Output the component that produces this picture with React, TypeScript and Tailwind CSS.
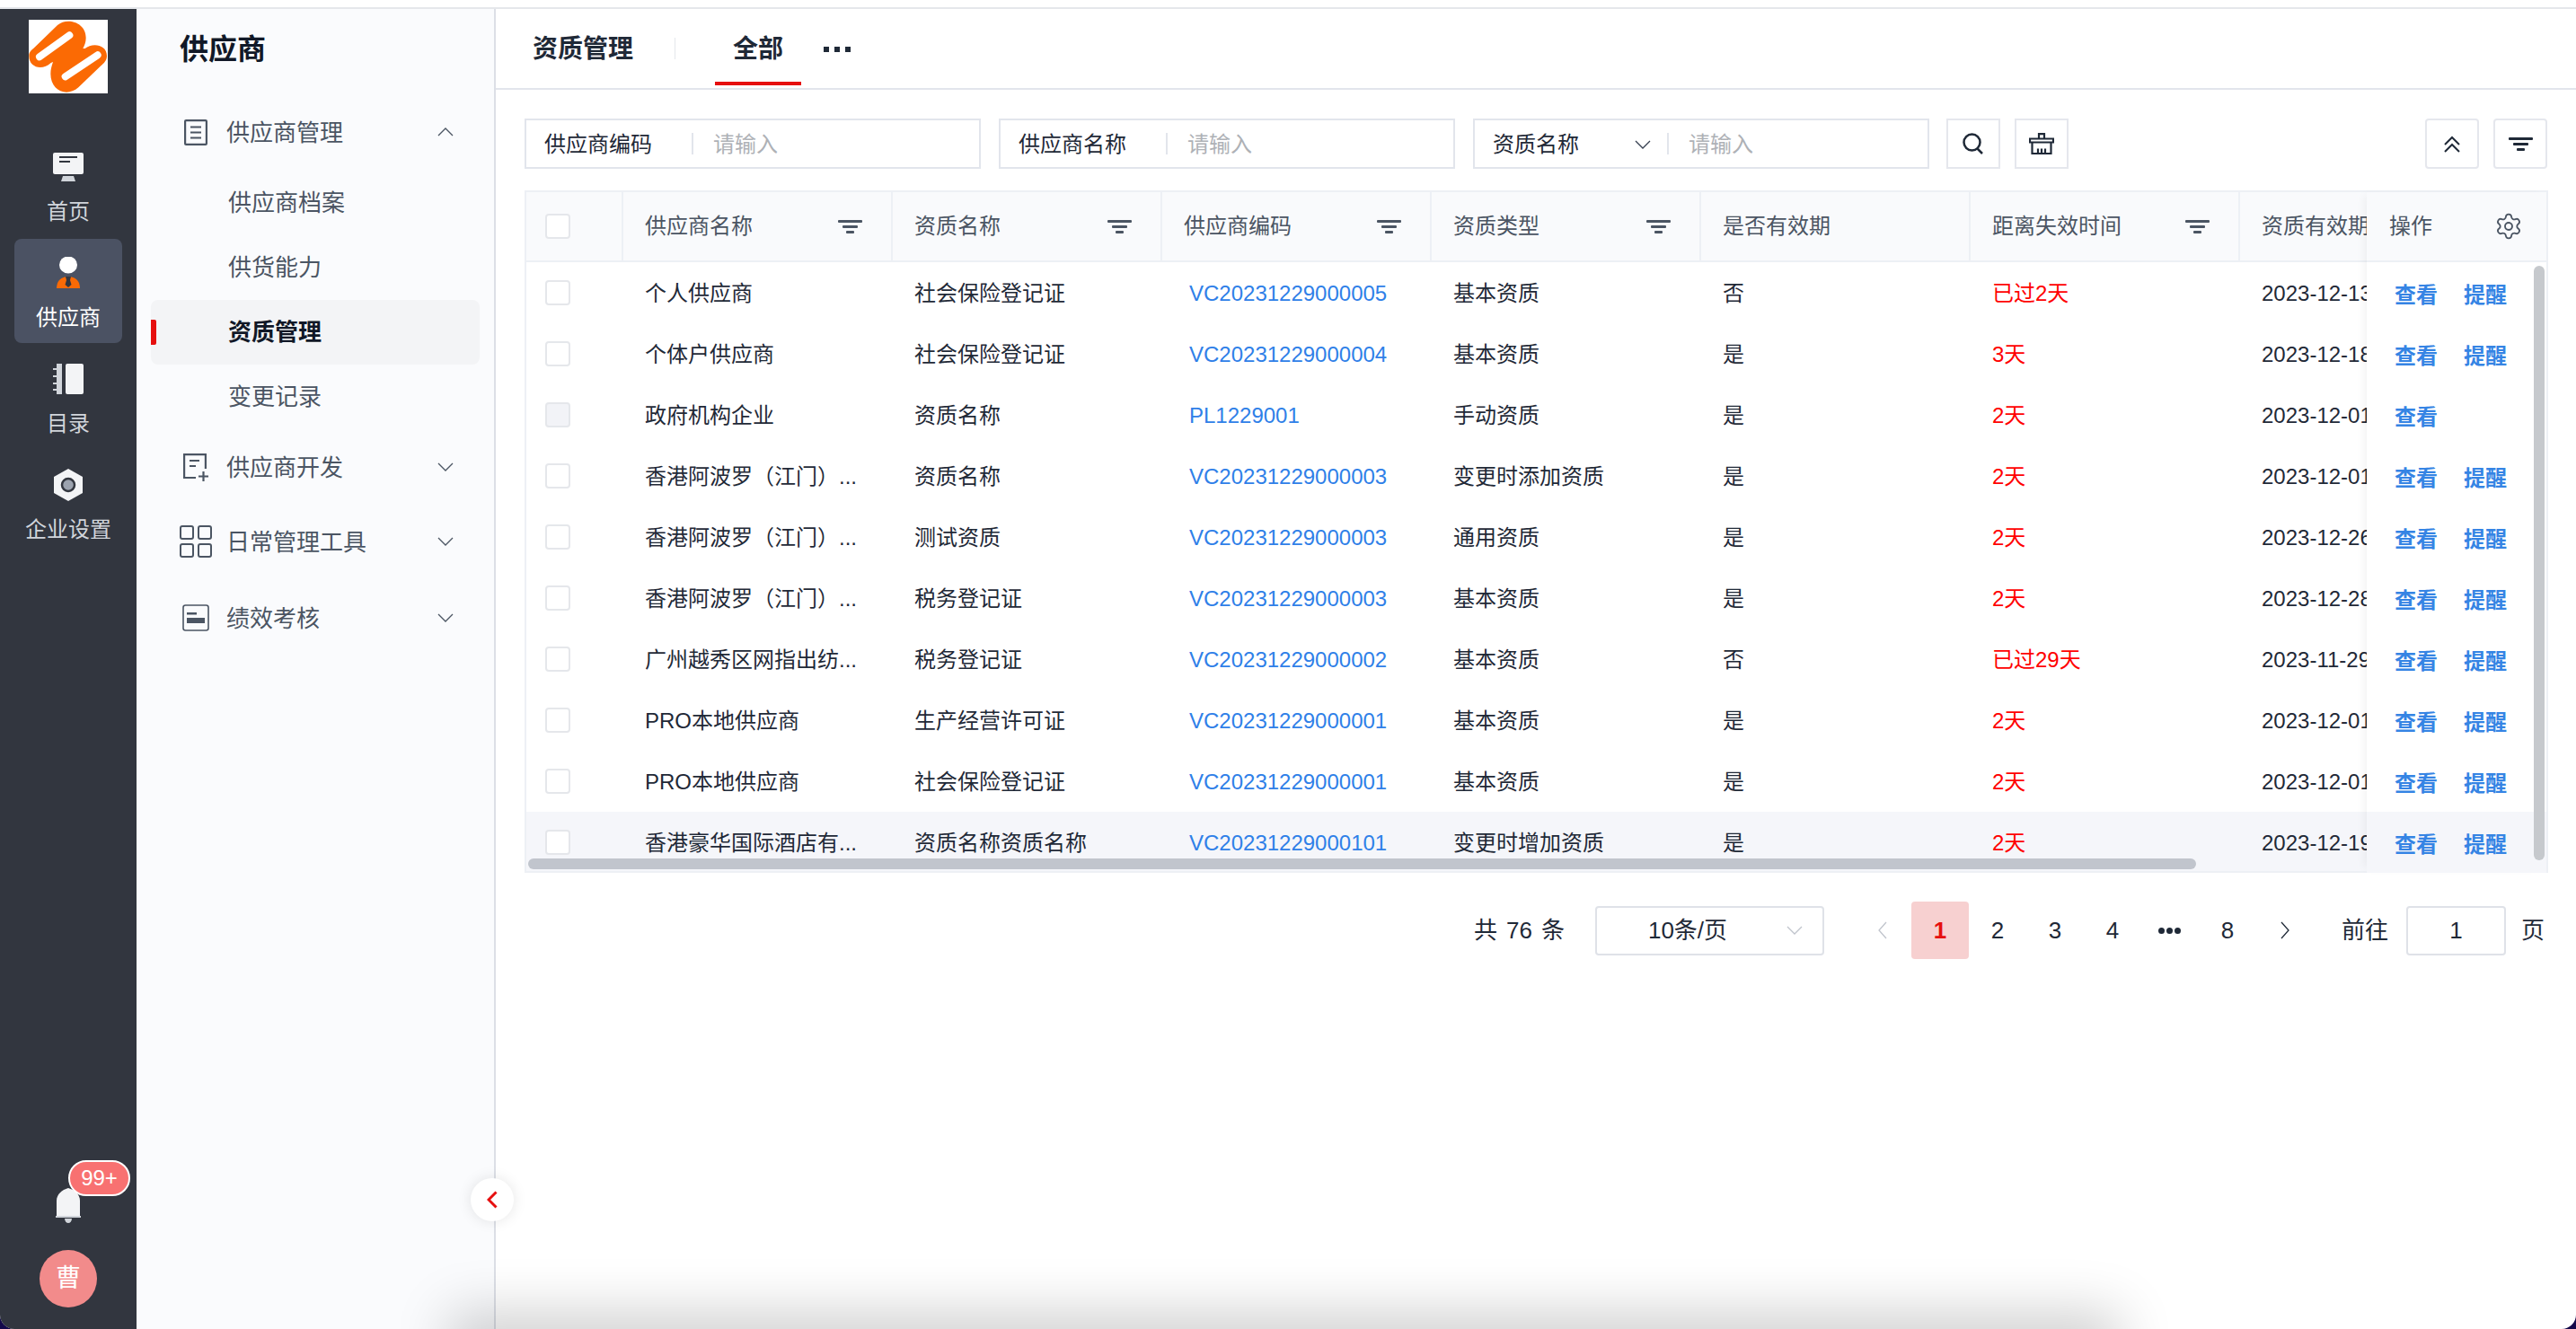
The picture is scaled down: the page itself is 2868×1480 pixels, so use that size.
import { Settings } from "lucide-react";

const rows = [
  { name: "个人供应商", cert: "社会保险登记证", code: "VC20231229000005", type: "基本资质", valid: "否", left: "已过2天", date: "2023-12-13" },
  { name: "个体户供应商", cert: "社会保险登记证", code: "VC20231229000004", type: "基本资质", valid: "是", left: "3天", date: "2023-12-18" },
  { name: "政府机构企业", cert: "资质名称", code: "PL1229001", type: "手动资质", valid: "是", left: "2天", date: "2023-12-01", locked: true },
  { name: "香港阿波罗（江门）...", cert: "资质名称", code: "VC20231229000003", type: "变更时添加资质", valid: "是", left: "2天", date: "2023-12-01" },
  { name: "香港阿波罗（江门）...", cert: "测试资质", code: "VC20231229000003", type: "通用资质", valid: "是", left: "2天", date: "2023-12-26" },
  { name: "香港阿波罗（江门）...", cert: "税务登记证", code: "VC20231229000003", type: "基本资质", valid: "是", left: "2天", date: "2023-12-28" },
  { name: "广州越秀区网指出纺...", cert: "税务登记证", code: "VC20231229000002", type: "基本资质", valid: "否", left: "已过29天", date: "2023-11-29" },
  { name: "PRO本地供应商", cert: "生产经营许可证", code: "VC20231229000001", type: "基本资质", valid: "是", left: "2天", date: "2023-12-01" },
  { name: "PRO本地供应商", cert: "社会保险登记证", code: "VC20231229000001", type: "基本资质", valid: "是", left: "2天", date: "2023-12-01" },
  { name: "香港豪华国际酒店有...", cert: "资质名称资质名称", code: "VC20231229000101", type: "变更时增加资质", valid: "是", left: "2天", date: "2023-12-19", hover: true },
];

const headers = [
  { label: "供应商名称", filter: true },
  { label: "资质名称", filter: true },
  { label: "供应商编码", filter: true },
  { label: "资质类型", filter: true },
  { label: "是否有效期", filter: false },
  { label: "距离失效时间", filter: true },
  { label: "资质有效期", filter: false },
];

function Logo() {
  return (
    <svg width="88" height="82" viewBox="24 24 264 246" className="bg-white">
      <path
        d="M25 145C25 130 35 125 45 115L120 42C150 15 215 30 215 85C215 100 210 110 205 120L212 120C235 100 285 105 285 145C285 160 275 170 265 178L190 250C150 285 97 260 97 205C97 190 100 180 105 165L98 168C70 195 25 185 25 145Z"
        fill="#fb6a04"
      />
      <path d="M60 148L160 76M146 214L254 142" stroke="#ffffff" strokeWidth="24" strokeLinecap="round" />
    </svg>
  );
}

function HomeIcon() {
  return (
    <svg width="34" height="32" viewBox="0 0 34 32">
      <rect x="0" y="0" width="34" height="24" rx="2" fill="#f3f4f6" />
      <rect x="7" y="4" width="20" height="2" fill="#32363f" />
      <rect x="7" y="9" width="12" height="2" fill="#32363f" />
      <path d="M9 32l2-6h12l2 6z" fill="#d1d5db" />
    </svg>
  );
}

function SupplierIcon() {
  return (
    <svg width="28" height="36" viewBox="0 0 28 36">
      <ellipse cx="14" cy="9" rx="10" ry="9.500" fill="#ffffff" />
      <path d="M1 35c0-8 5-13 13-13s13 5 13 13z" fill="#f96a06" />
      <path d="M11 22h6l-1 4 1.500 5-3.500 3-3.500-3 1.500-5z" fill="#32363f" />
    </svg>
  );
}

function CatalogIcon() {
  return (
    <svg width="34" height="34" viewBox="0 0 34 34">
      <rect x="4" y="0" width="6" height="34" fill="#d1d5db" />
      <rect x="0" y="5" width="6" height="2" fill="#d1d5db" />
      <rect x="0" y="13" width="6" height="2" fill="#d1d5db" />
      <rect x="0" y="21" width="6" height="2" fill="#d1d5db" />
      <rect x="0" y="28" width="6" height="2" fill="#d1d5db" />
      <rect x="14" y="0" width="20" height="34" rx="2" fill="#f3f4f6" />
    </svg>
  );
}

function CompanyIcon() {
  return (
    <svg width="32" height="36" viewBox="0 0 32 36">
      <path d="M16 0l16 9v18l-16 9-16-9V9z" fill="#f3f4f6" />
      <ellipse cx="16" cy="18" rx="7" ry="7" fill="#9ca3af" stroke="#32363f" strokeWidth="2.500" />
    </svg>
  );
}

function BellIcon() {
  return (
    <svg width="28" height="39" viewBox="0 0 28 39">
      <path d="M1 31V14C1 7 7 2 14 0c7 2 13 7 13 14v17z" fill="#f3f4f6" />
      <rect x="0" y="31" width="28" height="2" fill="#d1d5db" />
      <path d="M10 34h8c0 3-2 5-4 5s-4-2-4-5z" fill="#d1d5db" />
    </svg>
  );
}

function Chevron({ up, className }: { up?: boolean; className?: string }) {
  return (
    <svg width="18" height="10" viewBox="0 0 18 10" fill="none" className={className}>
      <path d={up ? "M1 9l8-8 8 8" : "M1 1l8 8 8-8"} stroke="currentColor" strokeWidth="1.300" />
    </svg>
  );
}

function ListDocIcon() {
  return (
    <svg width="26" height="29" viewBox="0 0 26 29" fill="none" stroke="#4b5563" strokeWidth="2.200">
      <rect x="1.100" y="1.100" width="23.800" height="26.800" rx="1" />
      <path d="M7 8.500h12M7 14.500h12M7 20.500h12" />
    </svg>
  );
}

function DocPlusIcon() {
  return (
    <svg width="28" height="31" viewBox="0 0 28 31" fill="none" stroke="#4b5563" strokeWidth="2.200">
      <path d="M14 27H1.100V1.100h23.800V17" />
      <path d="M7 8h11M7 14h7M17 25.500h11M22.500 20v11" />
    </svg>
  );
}

function GridIcon() {
  return (
    <svg width="36" height="36" viewBox="0 0 36 36" fill="none" stroke="#4b5563" strokeWidth="2">
      <rect x="1" y="1" width="14" height="14" rx="2" />
      <rect x="21" y="1" width="14" height="14" rx="2" />
      <rect x="1" y="21" width="14" height="14" rx="2" />
      <rect x="21" y="21" width="14" height="14" rx="2" />
    </svg>
  );
}

function CardIcon() {
  return (
    <svg width="30" height="30" viewBox="0 0 30 30" fill="none">
      <rect x="1" y="1" width="28" height="28" rx="2.500" stroke="#4b5563" strokeWidth="1.600" />
      <rect x="5" y="9" width="11" height="2.500" fill="#4b5563" />
      <rect x="5" y="15" width="20" height="6" fill="#4b5563" />
    </svg>
  );
}

function FilterIcon({ className }: { className?: string }) {
  return (
    <svg width="27" height="15" viewBox="0 0 27 15" className={className}>
      <rect x="0" y="0" width="27" height="3" rx="1" fill="currentColor" />
      <rect x="5" y="6" width="17" height="3" rx="1" fill="currentColor" />
      <rect x="9" y="12" width="9" height="3" rx="1" fill="currentColor" />
    </svg>
  );
}

function BroomIcon() {
  return (
    <svg width="28" height="24" viewBox="0 0 28 24" fill="none" stroke="#1f2937" strokeWidth="2.200">
      <path d="M11 6V1.200h6V6" />
      <path d="M1 6.500h26v4H1zM3.500 10.500V23h21V10.500" />
      <path d="M10 17.500V23M14 17.500V23M18 17.500V23" />
    </svg>
  );
}

function SearchIcon() {
  return (
    <svg width="24" height="24" viewBox="0 0 24 24" fill="none" stroke="#1f2937" strokeWidth="2.500">
      <circle cx="10.500" cy="10.500" r="9" />
      <path d="M16 17l6 6" />
    </svg>
  );
}

function CollapseUpIcon() {
  return (
    <svg width="20" height="19" viewBox="0 0 20 19" fill="none" stroke="#1f2937" strokeWidth="2">
      <path d="M2 10l8-8 8 8M2 18l8-8 8 8" />
    </svg>
  );
}

function RailItem({ label, icon, active }: { label: string; icon: React.ReactNode; active?: boolean }) {
  return (
    <div className={`flex w-[120px] flex-col items-center pt-[20px] ${active ? "mb-[2px] h-[116px] rounded-[8px] bg-[#4b5263] text-white" : "h-[118px] text-[#d1d5db]"}`}>
      <div className="flex h-[36px] items-center justify-center">{icon}</div>
      <div className="mt-[16px] text-[24px] leading-[32px]">{label}</div>
    </div>
  );
}

function MenuRow({ icon, label, up, className }: { icon: React.ReactNode; label: string; up?: boolean; className: string }) {
  return (
    <div className={`flex h-[72px] items-center pl-[46px] pr-[45px] text-[#4b5563] ${className}`}>
      <div className="flex w-[40px] justify-center">{icon}</div>
      <div className="ml-[14px] pt-[2px] text-[26px]">{label}</div>
      <Chevron up={up} className="ml-auto" />
    </div>
  );
}

function SubRow({ label, active }: { label: string; active?: boolean }) {
  return (
    <div className={`relative mx-[16px] flex h-[72px] items-center rounded-[8px] pl-[86px] text-[26px] ${active ? "bg-[#f3f4f6] font-semibold text-[#111827]" : "text-[#4b5563]"}`}>
      {active && <div className="absolute left-0 top-[22px] h-[28px] w-[6px] rounded-r-[2px] bg-[#e60f0f]" />}
      {label}
    </div>
  );
}

function SearchField({ label, select }: { label: string; select?: boolean }) {
  return (
    <div className="flex h-[56px] w-[508px] items-center border-2 border-[#e2e5ec] text-[24px]">
      <div className={`flex items-center pt-[2px] text-[#1f2937] ${select ? "w-[214px] pl-[20px] pr-[18px]" : "w-[184px] pl-[20px]"}`}>
        {label}
        {select && <Chevron className="ml-auto text-[#374151]" />}
      </div>
      <div className="h-[24px] w-[2px] bg-[#e2e5ec]" />
      <div className="ml-[22px] pt-[2px] text-[#aeb1b6]">请输入</div>
    </div>
  );
}

function ToolButton({ children, round }: { children: React.ReactNode; round?: boolean }) {
  return (
    <div className={`flex h-[56px] w-[60px] items-center justify-center border-2 border-[#e5e7ed] ${round ? "rounded-[4px]" : ""}`}>
      {children}
    </div>
  );
}

function Checkbox({ locked }: { locked?: boolean }) {
  return <div className={`h-[28px] w-[28px] rounded-[4px] border-2 border-[#e5e7eb] ${locked ? "bg-[#f2f3f7]" : "bg-white"}`} />;
}

export default function App() {
  return (
    <div className="relative h-[1480px] w-[2868px] overflow-hidden bg-[#14094a] [font-family:'Liberation_Sans','Noto_Sans_CJK_SC',sans-serif]">
      <div className="flex h-full flex-col overflow-hidden rounded-b-[16px] bg-white">
        {/* 상단 라인 */}
        <div className="h-[8px] bg-white" />
        <div className="h-[2px] bg-[#e5e7eb]" />

        <div className="flex min-h-0 flex-1">
          {/* 좌측 아이콘 레일 */}
          <div className="flex w-[152px] flex-col items-center bg-[#32363f]">
            <div className="mt-[12px]">
              <Logo />
            </div>
            <div className="mt-[44px] flex flex-col items-center">
              <RailItem label="首页" icon={<HomeIcon />} />
              <RailItem label="供应商" icon={<SupplierIcon />} active />
              <RailItem label="目录" icon={<CatalogIcon />} />
              <RailItem label="企业设置" icon={<CompanyIcon />} />
            </div>
            <div className="relative mt-auto flex h-[39px] w-[28px]">
              <BellIcon />
              <div className="absolute left-[14px] top-[-31px] flex h-[40px] w-[69px] items-center justify-center rounded-full border-2 border-white bg-[#f87171] text-[24px] text-white">
                99+
              </div>
            </div>
            <div className="mb-[24px] mt-[30px] flex h-[64px] w-[64px] items-center justify-center rounded-full bg-[#f28b8b] text-[28px] text-white">
              曹
            </div>
          </div>

          {/* 서브 메뉴 */}
          <div className="relative w-[400px] border-r-2 border-[#dcdfe6] bg-[#fafbfd]">
            <div className="flex h-[90px] items-center pl-[48px] text-[32px] font-semibold text-[#111827]">供应商</div>
            <MenuRow icon={<ListDocIcon />} label="供应商管理" up className="mt-[11px]" />
            <div className="mt-[7px]">
              <SubRow label="供应商档案" />
              <SubRow label="供货能力" />
              <SubRow label="资质管理" active />
              <SubRow label="变更记录" />
            </div>
            <MenuRow icon={<DocPlusIcon />} label="供应商开发" className="mt-[6px]" />
            <MenuRow icon={<GridIcon />} label="日常管理工具" className="mt-[11px]" />
            <MenuRow icon={<CardIcon />} label="绩效考核" className="mt-[13px]" />
            <div className="absolute right-[-22px] top-[1302px] flex h-[48px] w-[48px] items-center justify-center rounded-full bg-white shadow-[0_0_16px_rgba(0,0,0,0.1)]">
              <svg width="12" height="20" viewBox="0 0 12 20" fill="none">
                <path d="M10.500 1.500L2 10l8.500 8.500" stroke="#e60f0f" strokeWidth="3" />
              </svg>
            </div>
          </div>

          {/* 본문 */}
          <div className="flex min-w-0 flex-1 flex-col">
            <div className="flex h-[90px] items-center border-b-2 border-[#e2e5ec] pl-[41px]">
              <div className="pt-[2px] text-[28px] font-semibold text-[#1f2937]">资质管理</div>
              <div className="ml-[46px] h-[24px] w-[1px] bg-[#e5e7eb]" />
              <div className="relative ml-[44px] flex h-[88px] w-[96px] items-center justify-center pt-[2px] text-[28px] font-semibold text-[#1f2937]">
                全部
                <div className="absolute bottom-[3px] left-0 h-[4px] w-full bg-[#e60f0f]" />
              </div>
              <div className="ml-[25px] flex gap-[6px] pt-[2px]">
                <div className="h-[6px] w-[6px] bg-[#1f2937]" />
                <div className="h-[6px] w-[6px] bg-[#1f2937]" />
                <div className="h-[6px] w-[6px] bg-[#1f2937]" />
              </div>
            </div>

            <div className="pl-[32px] pr-[31px]">
              {/* 검색 조건 */}
              <div className="mt-[32px] flex">
                <div className="flex gap-[20px]">
                  <SearchField label="供应商编码" />
                  <SearchField label="供应商名称" />
                  <SearchField label="资质名称" select />
                </div>
                <div className="ml-[19px] flex gap-[16px]">
                  <ToolButton>
                    <SearchIcon />
                  </ToolButton>
                  <ToolButton>
                    <BroomIcon />
                  </ToolButton>
                </div>
                <div className="ml-auto mr-[1px] flex gap-[16px]">
                  <ToolButton round>
                    <CollapseUpIcon />
                  </ToolButton>
                  <ToolButton round>
                    <FilterIcon className="text-[#1f2937]" />
                  </ToolButton>
                </div>
              </div>

              {/* 테이블 */}
              <div className="relative mt-[24px] flex h-[760px] border-2 border-[#edf0f5]">
                <div className="min-w-0 flex-1 overflow-hidden">
                  <div className="flex h-[78px] w-[2408px] border-b-2 border-[#edf0f5] bg-[#f9fafc]">
                    <div className="flex w-[108px] items-center border-r-2 border-[#edf0f5] pl-[21px]">
                      <Checkbox />
                    </div>
                    {headers.map((h) => (
                      <div key={h.label} className="flex w-[300px] items-center border-r-2 border-[#edf0f5] pl-[24px] pr-[32px] text-[24px] text-[#4b5563]">
                        {h.label}
                        {h.filter && <FilterIcon className="ml-auto text-[#4b5563]" />}
                      </div>
                    ))}
                  </div>
                  {rows.map((r, i) => (
                    <div key={i} className={`flex h-[68px] w-[2408px] items-center text-[24px] text-[#1f2937] ${r.hover ? "bg-[#f5f6fa]" : ""}`}>
                      <div className="w-[108px] pl-[21px]">
                        <Checkbox locked={r.locked} />
                      </div>
                      <div className="w-[300px] pl-[24px] pt-[2px]">{r.name}</div>
                      <div className="w-[300px] pl-[24px] pt-[2px]">{r.cert}</div>
                      <div className="w-[300px] pl-[30px] pt-[2px] text-[#2f80e8]">{r.code}</div>
                      <div className="w-[300px] pl-[24px] pt-[2px]">{r.type}</div>
                      <div className="w-[300px] pl-[24px] pt-[2px]">{r.valid}</div>
                      <div className="w-[300px] pl-[24px] pt-[2px] text-[#ff0000]">{r.left}</div>
                      <div className="w-[300px] pl-[24px] pt-[2px]">{r.date}</div>
                    </div>
                  ))}
                </div>

                {/* 고정 열 */}
                <div className="w-[200px] shrink-0 shadow-[-6px_0_10px_-4px_rgba(0,0,0,0.06)]">
                  <div className="flex h-[78px] items-center border-b-2 border-[#edf0f5] bg-[#f9fafc] pl-[25px] pr-[26px] text-[24px] text-[#4b5563]">
                    操作
                    <Settings size={32} strokeWidth={1.400} className="ml-auto" />
                  </div>
                  {rows.map((r, i) => (
                    <div key={i} className={`flex h-[68px] items-center gap-[29px] pl-[31px] pt-[6px] text-[24px] font-semibold text-[#3584e4] ${r.hover ? "bg-[#f5f6fa]" : "bg-white"}`}>
                      <span>查看</span>
                      {!r.locked && <span>提醒</span>}
                    </div>
                  ))}
                </div>

                {/* 스크롤바 */}
                <div className="absolute bottom-[2px] left-[2px] h-[12px] w-[1857px] rounded-full bg-[#c1c5cd]" />
                <div className="absolute right-[2px] top-[82px] h-[662px] w-[12px] rounded-full bg-[#c6c9cd]" />
              </div>

              {/* 페이지네이션 */}
              <div className="mt-[32px] flex h-[64px] items-center text-[26px] text-[#1f2937]">
                <div className="ml-[1057px] flex gap-[10px]">
                  <span>共</span>
                  <span>76</span>
                  <span>条</span>
                </div>
                <div className="ml-[34px] flex h-[55px] w-[255px] items-center rounded-[4px] border-2 border-[#dfe2e8] pl-[57px] pr-[22px]">
                  10条/页
                  <Chevron className="ml-auto text-[#c0c4cc]" />
                </div>
                <div className="ml-[33px] flex">
                  <div className="flex h-[64px] w-[64px] items-center justify-center">
                    <svg width="10" height="20" viewBox="0 0 10 20" fill="none">
                      <path d="M9 1L1 10l8 9" stroke="#c0c4cc" strokeWidth="1.300" />
                    </svg>
                  </div>
                  <div className="flex h-[64px] w-[64px] items-center justify-center rounded-[4px] bg-[#f7d0d0] font-bold text-[#e60f0f]">1</div>
                  <div className="flex h-[64px] w-[64px] items-center justify-center">2</div>
                  <div className="flex h-[64px] w-[64px] items-center justify-center">3</div>
                  <div className="flex h-[64px] w-[64px] items-center justify-center">4</div>
                  <div className="flex h-[64px] w-[64px] items-center justify-center gap-[2px]">
                    <div className="h-[7px] w-[7px] rounded-full bg-[#1f2937]" />
                    <div className="h-[7px] w-[7px] rounded-full bg-[#1f2937]" />
                    <div className="h-[7px] w-[7px] rounded-full bg-[#1f2937]" />
                  </div>
                  <div className="flex h-[64px] w-[64px] items-center justify-center">8</div>
                  <div className="flex h-[64px] w-[64px] items-center justify-center">
                    <svg width="10" height="20" viewBox="0 0 10 20" fill="none">
                      <path d="M1 1l8 9-8 9" stroke="#1f2937" strokeWidth="1.300" />
                    </svg>
                  </div>
                </div>
                <div className="ml-[31px]">前往</div>
                <div className="ml-[20px] flex h-[55px] w-[111px] items-center justify-center rounded-[4px] border-2 border-[#dfe2e8]">1</div>
                <div className="ml-[17px]">页</div>
              </div>
            </div>
          </div>
        </div>
      </div>

      {/* 하단 창 그림자 */}
      <div className="absolute left-[530px] top-[1490px] h-[20px] w-[1800px] shadow-[0_0_60px_30px_rgba(0,0,0,0.18)]" />
    </div>
  );
}
